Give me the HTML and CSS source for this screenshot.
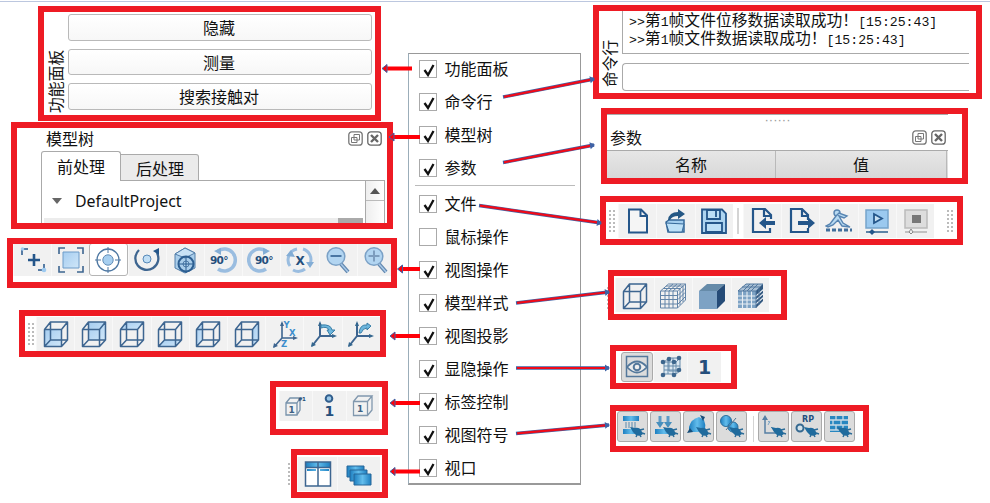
FILE: index.html
```
<!DOCTYPE html>
<html lang="zh-CN">
<head>
<meta charset="utf-8">
<title>功能面板</title>
<link rel="stylesheet" href="styles.css">
</head>
<body>
<svg class="defs" width="0" height="0">
  <defs>
    <linearGradient id="sky" x1="0" y1="0" x2="1" y2="1"><stop offset="0" stop-color="#a6cdf0"/><stop offset="1" stop-color="#cfe6f8"/></linearGradient>
    <linearGradient id="deep" x1="0" y1="0" x2="1" y2="0"><stop offset="0" stop-color="#1e7fc0"/><stop offset=".5" stop-color="#63bdec"/><stop offset="1" stop-color="#1e7fc0"/></linearGradient>
    <g id="edges" fill="none" stroke="#3d6590" stroke-width="1.5" stroke-linejoin="round"><path d="M2.5 26.500V9.500H19.500V26.500ZM8.500 2H25.500V20H8.500ZM2.500 9.500 8.500 2M19.500 9.500 25.500 2M19.500 26.500 25.500 20M2.500 26.500 8.500 20"/></g>
    <g id="hand"><path d="m11 14 5 1q4-1 6 2l2 4q-3 3-7 1l-3-3z" fill="#206b9d"/><path d="m21 17 4-1m-2 4 3 1m-5 1 1 2m-4-2-1 2" stroke="#2b6c98" stroke-width="1.500"/></g>
    <g id="float" fill="none" stroke="#777"><rect x=".8" y=".8" width="13.400" height="13.400" rx="3" stroke-width="1.300"/><path d="M6 3.500h5.500V9H6zM3.500 6.500H9v5H3.500z"/></g>
    <g id="close" fill="none" stroke="#666"><rect x=".8" y=".8" width="13.400" height="13.400" rx="3" stroke-width="1.300"/><path d="m4 4 7 7m0-7-7 7" stroke-width="2.400"/></g>
    <g id="tick"><path d="M4.500 9 8 14 13.500 4" fill="none" stroke="#111" stroke-width="2.300"/></g>
    <marker id="head" viewBox="0 0 6 8" refX="5" refY="4" markerWidth="6" markerHeight="8" markerUnits="userSpaceOnUse" orient="auto"><path d="M1 .5 6 4 1 7.500Z" fill="#3f62a5"/></marker>
  </defs>
</svg>

<main class="canvas">
  <section class="callout functions">
    <div class="vertical">功能面板</div>
    <div class="buttons"><div class="push">隐藏</div><div class="push">测量</div><div class="push">搜索接触对</div></div>
  </section>

  <section class="callout model">
    <div class="dock-title"><span>模型树</span><svg width="15" height="15"><use href="#float"/></svg><svg width="15" height="15"><use href="#close"/></svg></div>
    <div class="tabs"><div class="tab active">前处理</div><div class="tab">后处理</div></div>
    <div class="tree">
      <div class="tree-body"><div class="tree-row"><svg width="10" height="6"><path d="M0 0H10L5 6Z" fill="#666"/></svg><span>DefaultProject</span></div><div class="tree-header"></div></div>
      <div class="scroll"><svg width="10" height="6"><path d="M0 6H10L5 0Z" fill="#555"/></svg></div>
    </div>
  </section>

  <section class="callout bar viewops">
    <div class="slot"><svg width="28" height="28" fill="none" stroke="#24568a"><path d="M3 9V3h6M19 24h6v-6" stroke-width="1.500"/><path d="M9 14h12M15 8v12" stroke-width="2.600"/><circle cx="3.500" cy="3" r="1.800" fill="#9dcaf0" stroke="none"/><circle cx="25" cy="24" r="2.300" fill="#9dcaf0" stroke="none"/></svg></div>
    <div class="slot"><svg width="28" height="28"><path d="M6 6h16v16H6z" fill="url(#sky)" stroke="#6c9bc8"/><path d="M2 8V2h6M20 2h6v6M26 20v6h-6M8 26H2v-6" fill="none" stroke="#3d6590" stroke-width="1.600"/></svg></div>
    <div class="slot pressed-light"><svg width="28" height="28"><circle cx="14" cy="14" r="5.200" fill="#a7cff0" stroke="#648eb7"/><circle cx="14" cy="14" r="11" fill="none" stroke="#4d77a2" stroke-width="1.300"/><path d="M14 1v6m0 14v6M1 14h6m14 0h6" stroke="#4d77a2"/></svg></div>
    <div class="slot"><svg width="28" height="28"><circle cx="14" cy="13" r="4" fill="#c0def5" stroke="#5789b8"/><path d="M6 4A11.500 11.500 0 1 0 24 7" fill="none" stroke="#3d6590" stroke-width="2.300"/><path d="m20 5 6-3v7z" fill="#24568a"/></svg></div>
    <div class="slot"><svg width="28" height="28" stroke="#537ea9"><path d="m4 8 10-6 10 5v15l-10 5-10-5z" fill="#a9cdea"/><path d="m4 8 10 4 10-5-10-5z" fill="#c8e2f5"/><circle cx="15" cy="18" r="7.500" fill="none" stroke="#2c5e91" stroke-width="2"/><circle cx="15" cy="18" r="3" fill="none"/><path d="M15 10v17M7 18h16" stroke="#2c5e91"/></svg></div>
    <div class="slot"><svg width="30" height="28"><path d="M9 5A11 11 0 1 1 9 23" fill="none" stroke="#9abde0" stroke-width="3.500"/><path d="m5 5 7-3v7z" fill="#83add5"/><text x="1" y="18" class="degree">90°</text></svg></div>
    <div class="slot"><svg width="30" height="28"><path d="M19 5A11 11 0 1 0 19 23" fill="none" stroke="#9abde0" stroke-width="3.500"/><path d="m23 5-7-3v7z" fill="#83add5"/><text x="8" y="18" class="degree">90°</text></svg></div>
    <div class="slot"><svg width="28" height="28"><path d="M11 3A11 11 0 0 0 4 20M7 24A11 11 0 0 0 19 23M24 18A11 11 0 0 0 17 3" fill="none" stroke="#9abde0" stroke-width="3"/><path d="m0 10 5-6 4 7zM20 16h8l-4 6z" fill="#83add5"/><text x="9.500" y="19" class="letter">X</text></svg></div>
    <div class="slot"><svg width="28" height="28"><path d="m17 18 7 8" stroke="#6288af" stroke-width="4"/><path d="m17 18 7 8" stroke="#a9c9e8" stroke-width="1.500"/><circle cx="12" cy="10.500" r="8.800" fill="#b2d5f1" stroke="#7ba1c6" stroke-width="1.500"/><path d="M6.500 10h11" stroke="#4a76a3" stroke-width="2"/></svg></div>
    <div class="slot"><svg width="28" height="28"><path d="m17 18 7 8" stroke="#6288af" stroke-width="4"/><path d="m17 18 7 8" stroke="#a9c9e8" stroke-width="1.500"/><circle cx="12" cy="10.500" r="8.800" fill="#b2d5f1" stroke="#7ba1c6" stroke-width="1.500"/><path d="M6.500 10h11M12 4.500v11" stroke="#7d9dbe" stroke-width="2"/></svg></div>
  </section>

  <section class="callout bar projection">
    <div class="grip"></div>
    <div class="slot"><svg width="28" height="28"><path d="M2.500 9.500h17v17h-17z" fill="url(#sky)"/><use href="#edges"/></svg></div>
    <div class="slot"><svg width="28" height="28"><path d="M8.500 2h17v18h-17z" fill="url(#sky)"/><use href="#edges"/></svg></div>
    <div class="slot"><svg width="28" height="28"><path d="m2.500 9.500 6-7.500h17l-6 7.500z" fill="url(#sky)"/><use href="#edges"/></svg></div>
    <div class="slot"><svg width="28" height="28"><path d="m2.500 26.500 6-6.500h17l-6 6.500z" fill="url(#sky)"/><use href="#edges"/></svg></div>
    <div class="slot"><svg width="28" height="28"><path d="m2.500 9.500 6-7.500v18l-6 6.500z" fill="url(#sky)"/><use href="#edges"/></svg></div>
    <div class="slot"><svg width="28" height="28"><path d="m19.500 9.500 6-7.500v18l-6 6.500z" fill="url(#sky)"/><use href="#edges"/></svg></div>
    <div class="slot"><svg width="28" height="28"><path d="M11 3v15h13M11 18l-8 9" fill="none" stroke="#3d6590" stroke-width="1.600"/><path d="m9 6 2-5 2 5zM22 16l5 2-5 2zM2 28l1-5 4 3z" fill="#3d6590"/><text x="12.500" y="8" class="axis">Y</text><text x="18" y="16" class="axis">X</text><text x="10" y="26.500" class="axis">Z</text></svg></div>
    <div class="slot"><svg width="28" height="28"><path d="M11 3v13h14M11 16 3 26" fill="none" stroke="#3d6590" stroke-width="2"/><path d="m9 6 2-5 2 5zM23 14l5 2-5 2zM2 27l1-5 4 3z" fill="#34678f"/><path d="M12 5Q22 4 23 10h3l-5 5-3-5h2Q18 6 12 8Z" fill="#6cb5dc" stroke="#397fa8"/></svg></div>
    <div class="slot"><svg width="28" height="28"><path d="M10 3v13h14M10 16 2 26" fill="none" stroke="#3d6590" stroke-width="2"/><path d="m8 6 2-5 2 5zM22 14l5 2-5 2zM1 27l1-5 4 3z" fill="#34678f"/><path d="M12 13Q13 4 20 5V3l4 3-4 4V8Q16 8 14 13Z" fill="#6cb5dc" stroke="#397fa8"/></svg></div>
  </section>

  <section class="callout bar labels">
    <div class="slot"><svg width="24" height="24" fill="none" stroke="#7792ab"><path d="M2 9h11v12H2zM2 9l4-5h10l-3 5M16 4v12l-3 5" stroke-width="1.300"/><text x="4.500" y="19" class="small-num">1</text><text x="14" y="7" class="tiny-num">#1</text></svg></div>
    <div class="slot"><svg width="22" height="24"><circle cx="11" cy="4.500" r="3.300" fill="#9bc8e8" stroke="#315e8d" stroke-width="2"/><text x="6.500" y="22" class="label-num">1</text></svg></div>
    <div class="slot"><svg width="22" height="24" fill="none" stroke="#8198ae"><path d="M1.500 7.500h14v14h-14zM1.500 7.500 6 2h14l-4.500 5.500M20 2v14l-4.500 5.500" stroke-width="1.300"/><text x="5" y="18" class="small-num">1</text></svg></div>
  </section>

  <div class="outside-grip view-grip"></div>
  <section class="callout bar viewport">
    <div class="slot"><svg width="28" height="28"><path d="M1.500 2h25v24h-25z" fill="#fff"/><path d="M2 2h12v6H2zM14 2h12v6H14zM3 9h9v2H3zM16 9h9v2h-9z" fill="url(#deep)"/><path d="M1.500 2h25v24h-25zM14 2v24M2 7.500h24" fill="none" stroke="#3d6590" stroke-width="1.500"/></svg></div>
    <div class="slot"><svg width="28" height="28" fill="url(#deep)" stroke="#266799"><path d="M2 6h17v11H2z"/><path d="M5 10h17v11H5z"/><path d="M9 14h17v11H9z"/></svg></div>
  </section>

  <section class="callout command">
    <div class="vertical">命令行</div>
    <div class="terminal">
      <div class="log"><p><span class="mono">&gt;&gt;</span>第<span class="mono">1</span>帧文件位移数据读取成功！<span class="mono">[15:25:43]</span></p><p><span class="mono">&gt;&gt;</span>第<span class="mono">1</span>帧文件数据读取成功！<span class="mono">[15:25:43]</span></p></div>
      <div class="prompt"></div>
    </div>
  </section>

  <section class="callout parameters">
    <div class="dots">······</div>
    <div class="dock-title"><span>参数</span><svg width="15" height="15"><use href="#float"/></svg><svg width="15" height="15"><use href="#close"/></svg></div>
    <div class="table-head"><div>名称</div><div>值</div></div>
  </section>

  <section class="callout bar files">
    <div class="grip"></div>
    <div class="slot"><svg width="28" height="28"><path d="M5 2.500h12l6 6v17H5zM16.500 3v6H23" fill="#f5f5f5" stroke="#24568a" stroke-width="2"/></svg></div>
    <div class="slot"><svg width="28" height="28"><path d="m4 15 3-2h15v12H6z" fill="#a4cff0" stroke="#356899" stroke-width="1.500"/><path d="m4 16 18 1-2 8H7z" fill="#bde0f7" stroke="#356899"/><path d="M6 13Q7 5 16 5V2l7 5-7 5V9q-6 0-8 4z" fill="#245784"/></svg></div>
    <div class="slot"><svg width="28" height="28" fill="#add4f0" stroke="#24568a" stroke-width="1.800"><path d="M2 2.500h20l4 4V26H2z"/><path d="M7 3h13v9H7zM6 16h16v9H6z" fill="#bddff6"/><path d="M16 4v6"/></svg></div>
    <div class="divider"></div>
    <div class="slot"><svg width="28" height="28"><path d="M22 12V8l-6-6H4v23h17v-4M15 2v7h6" fill="none" stroke="#24568a" stroke-width="2.200"/><path d="m10 16 7-6v4h9v4h-9v4z" fill="#24568a"/></svg></div>
    <div class="slot"><svg width="28" height="28"><path d="M21 13V8l-6-6H4v23h17v-4M15 2v7h6" fill="none" stroke="#24568a" stroke-width="2.200"/><path d="M11 14h10v-4l7 6-7 6v-4H11z" fill="#24568a"/></svg></div>
    <div class="slot"><svg width="28" height="28"><g fill="#b8daf2" stroke="#5784b1" stroke-width="1.400"><circle cx="12" cy="6" r="3"/><path d="m11 9-6 8-4 2 2 1 5-2 5-5 4 6 8 1-7-4-4-7 5 2 3-2-8-3z"/></g><path d="M1 23h26" stroke="#416f9c" stroke-width="3" stroke-dasharray="4 2"/></svg></div>
    <div class="slot"><svg width="28" height="28"><path d="M3 3h22v18H3z" fill="#9bc9ef" stroke="#75a4cc" stroke-width="1.500"/><path d="m11 7 8 4.500-8 4.500z" fill="#c7e0f2" stroke="#24568a" stroke-width="1.800"/><path d="M3 25h22" stroke="#5c83a6" stroke-width="2"/><path d="m9 22 3 3-3 3-3-3z" fill="#24568a"/></svg></div>
    <div class="slot"><svg width="28" height="28"><path d="M3 3h22v18H3z" fill="#ddd" stroke="#bbb" stroke-width="1.500"/><path d="M10 8h9v8h-9z" fill="#777"/><path d="M3 25h22" stroke="#b0b0b0" stroke-width="1.500"/><path d="m9 22 2 3-2 2-2-2z" fill="#eee" stroke="#888"/></svg></div>
    <div class="grip"></div>
  </section>

  <div class="outside-grip style-grip"></div>
  <section class="callout bar styles">
    <div class="slot"><svg width="28" height="28"><use href="#edges"/></svg></div>
    <div class="slot"><svg width="28" height="28" fill="none" stroke="#6284a8" stroke-width="1"><path d="M1.500 9h17v17h-17zM1.500 9l8-7h17l-8 7M26.500 2v16l-8 8M6 9v17M10 9v17M14 9v17M2 13.500h17l7-7M2 17.500h17l7-7M2 22h17l7-7M6 9l8-7M10 9l8-7M14 9l8-7M21 7v16M24 4v16M7 4h17M4 6.500h17"/></svg></div>
    <div class="slot"><svg width="28" height="28"><path d="M1 9h18v18H1z" fill="#7da2c4"/><path d="m1 9 8-7h18l-8 7z" fill="#668ba9"/><path d="m19 9 8-7v17l-8 8z" fill="#254b77"/></svg></div>
    <div class="slot"><svg width="28" height="28"><path d="M1 9h18v17H1z" fill="#7da2c4"/><path d="m19 9 7-7v17l-7 7z" fill="#31577f"/><path d="m1 9 8-7h17l-7 7z" fill="#a9c0d5"/><g fill="none" stroke="#e8eef4" stroke-width="1.100"><path d="M5.500 9v18M10 9v18M14.500 9v18M1 14h18l8-7M1 18h18l8-7M1 22h18l8-7"/></g><path d="m1 9 8-7h17l-7 7zM6 9l7-7M10 9l7-7M14 9l7-7M5 5h18M19 9v17M22 6v17" fill="none" stroke="#52789f"/></svg></div>
  </section>

  <section class="callout bar visibility">
    <div class="slot pressed"><svg width="24" height="24" fill="none" stroke="#54789b"><path d="M1.500 1.500h21v20h-21z" stroke-width="1.500"/><path d="M2 12Q12 1 22 12 12 23 2 12Z" fill="#eee" stroke-width="1.800"/><circle cx="12" cy="12" r="3.300" stroke-width="2"/></svg></div>
    <div class="slot"><svg width="24" height="24"><path d="M5 7h12v12H5zM10 3h11v13H10zM5 7l5-4M17 7l4-4M17 19l4-3M9 3v16M14 3v16M5 11h16M5 15h16" stroke="#668bab" fill="#dce8f1"/><g fill="#3d668d"><circle cx="10" cy="4" r="2.300"/><circle cx="20" cy="3" r="2.300"/><circle cx="4" cy="7" r="2.300"/><circle cx="15" cy="7" r="2.300"/><circle cx="4" cy="20" r="2.300"/><circle cx="15" cy="20" r="2.300"/><circle cx="20" cy="15" r="2.300"/></g></svg></div>
    <div class="slot"><svg width="24" height="24"><text x="5" y="18.500" class="big-num">1</text></svg></div>
  </section>

  <section class="callout bar symbols">
    <div class="slot pressed"><svg width="28" height="28"><path d="M4 3h16v5H4zM4 16h16v5H4z" fill="url(#deep)"/><path d="M7 9v6m3-6v6m3-6v6m3-6v6" stroke="#588aae"/><use href="#hand"/></svg></div>
    <div class="slot pressed"><svg width="28" height="28"><path d="M3 16h18v5H3z" fill="url(#deep)"/><path d="M8 3v8m8-8v8" stroke="#5c9bc7" stroke-width="3"/><path d="m4 9 4 6 4-6zm8 0 4 6 4-6z" fill="#478fbd"/><use href="#hand"/></svg></div>
    <div class="slot pressed"><svg width="28" height="28"><path d="M4 19V14Q6 6 14 4l5 3q2 5 1 9l-7 3z" fill="url(#deep)"/><path d="m15 2 5 2-2 4zM2 20l3-5 3 4z" fill="#174e79"/><use href="#hand"/></svg></div>
    <div class="slot pressed"><svg width="28" height="28"><circle cx="8" cy="8" r="5.500" fill="url(#deep)" stroke="#2d719e"/><circle cx="15" cy="14" r="5" fill="url(#deep)" stroke="#2d719e"/><path d="m8 17 10-12" stroke="#507391"/><use href="#hand"/></svg></div>
    <div class="divider"></div>
    <div class="slot pressed"><svg width="28" height="28"><path d="M5 5v15h13" fill="none" stroke="#557fa4" stroke-width="1.500"/><path d="m2 7 3-5 3 5zM17 17l5 3-5 3z" fill="#557fa4"/><path d="m8 8 2 2m0-2-2 4m3 2 3 3" stroke="#7ca5c5"/><use href="#hand"/></svg></div>
    <div class="slot pressed"><svg width="28" height="28"><text x="9" y="8.500" class="rp">RP</text><circle cx="7" cy="15" r="3.500" fill="#d4e2ea" stroke="#366990" stroke-width="2"/><use href="#hand"/></svg></div>
    <div class="slot pressed"><svg width="28" height="28"><path d="M4 3h18v16H4z" fill="#2887c0"/><path d="M4 7h18M4 12h18M4 17h18M10 3v4m7-4v4M7 7v5m8-5v5M10 12v5m7-5v5" stroke="#c9dae5" stroke-width="1.300"/><use href="#hand"/></svg></div>
  </section>

  <section class="menu">
    <div class="item"><svg class="check" width="18" height="18"><use href="#tick"/></svg><span>功能面板</span></div>
    <div class="item"><svg class="check" width="18" height="18"><use href="#tick"/></svg><span>命令行</span></div>
    <div class="item"><svg class="check" width="18" height="18"><use href="#tick"/></svg><span>模型树</span></div>
    <div class="item"><svg class="check" width="18" height="18"><use href="#tick"/></svg><span>参数</span></div>
    <div class="separator"></div>
    <div class="item"><svg class="check" width="18" height="18"><use href="#tick"/></svg><span>文件</span></div>
    <div class="item"><svg class="check" width="18" height="18"></svg><span>鼠标操作</span></div>
    <div class="item"><svg class="check" width="18" height="18"><use href="#tick"/></svg><span>视图操作</span></div>
    <div class="item"><svg class="check" width="18" height="18"><use href="#tick"/></svg><span>模型样式</span></div>
    <div class="item"><svg class="check" width="18" height="18"><use href="#tick"/></svg><span>视图投影</span></div>
    <div class="item"><svg class="check" width="18" height="18"><use href="#tick"/></svg><span>显隐操作</span></div>
    <div class="item"><svg class="check" width="18" height="18"><use href="#tick"/></svg><span>标签控制</span></div>
    <div class="item"><svg class="check" width="18" height="18"><use href="#tick"/></svg><span>视图符号</span></div>
    <div class="item"><svg class="check" width="18" height="18"><use href="#tick"/></svg><span>视口</span></div>
  </section>

  <svg class="arrows" width="990" height="503">
    <g stroke="#ff0008" stroke-width="4"><path d="M412 68.500H385M420 137H393M420 269H401M420 336H393M420 403H393M420 471.500H393"/></g>
    <g fill="#ff0008" stroke="#3f62a5" stroke-width="1"><path d="m382 68.500 5-4v8zM389 137l5-4v8zM397.500 269l5-4v8zM390 336l5-4v8zM390 403l5-4v8zM390 471.500l5-4v8z"/></g>
    <g stroke="#3f62a5" stroke-width="3.400"><path d="M503 97 594 79" marker-end="url(#head)"/><path d="M503 162.500 594 145" marker-end="url(#head)"/><path d="M479 205.500 601 223" marker-end="url(#head)"/><path d="M516 303 609 292" marker-end="url(#head)"/><path d="M516 368 609 368" marker-end="url(#head)"/><path d="M516 433.500 609 425" marker-end="url(#head)"/></g>
    <path d="M504 96.800 590 79.800M504 162.300 590 145.800M480 205.600 597 222.400M517 302.900 605 292.500M517 368H605M517 433.400 605 425.400" stroke="#f00a18" stroke-width="2.200"/>
  </svg>
</main>
</body>
</html>
```
FILE: styles.css
```
* { box-sizing: border-box; }
body { margin: 0; background: #fff; color: #111; font: 16px/20px "Noto Sans CJK SC", sans-serif; }
.defs { position: absolute; }
.canvas { position: relative; width: 990px; height: 503px; overflow: hidden; border-top: 1px solid #fff; }
.canvas::before { content: ""; display: block; height: 1px; background: #bcc7df; }
svg { display: block; flex: none; }
svg text { stroke: none; fill: #254f7c; font-family: "DejaVu Sans", sans-serif; font-weight: bold; }

/* Annotated fragments pinned on the diagram */
.callout { position: absolute; border: 6.500px solid #ee1b24; background: #fff; overflow: hidden; margin-top: -1px; }
.functions { left: 38px; top: 6px; width: 343px; height: 115px; display: flex; padding: 0 3px 0 3px; }
.model { left: 11px; top: 122px; width: 382px; height: 107px; }
.viewops { left: 7px; top: 238px; width: 390px; height: 50px; }
.projection { left: 19px; top: 310px; width: 367px; height: 47px; }
.labels { left: 270px; top: 381px; width: 118px; height: 54px; }
.viewport { left: 291px; top: 449px; width: 97px; height: 49px; }
.command { left: 593px; top: 5px; width: 389px; height: 94px; display: flex; }
.parameters { left: 601px; top: 108px; width: 367px; height: 76px; }
.files { left: 600px; top: 196px; width: 363px; height: 49px; }
.styles { left: 608px; top: 270px; width: 179px; height: 50px; }
.visibility { left: 610px; top: 345px; width: 127px; height: 44px; }
.symbols { left: 610px; top: 405px; width: 259px; height: 47px; }

.vertical { writing-mode: vertical-rl; text-orientation: sideways; transform: rotate(180deg); width: 18px; line-height: 18px; font-size: 15.800px; white-space: nowrap; }
.functions .vertical { padding-bottom: 37px; margin-right: 3px; height: 101px; }
.buttons { flex: 1; padding-top: 2px; display: flex; flex-direction: column; gap: 8px; }
.push { height: 26.500px; flex: none; border: 1px solid #b9b9b9; border-radius: 3px; background: linear-gradient(#fff, #f7f7f7); text-align: center; line-height: 24px; padding-right: 2px; }

.dock-title { display: flex; align-items: center; gap: 4px; height: 22px; }
.dock-title span { flex: 1; }
.model .dock-title { padding: 0 5px 2px 29px; }
.tabs { display: flex; align-items: flex-end; height: 31px; padding-left: 24px; position: relative; z-index: 1; }
.tab { width: 78px; height: 27px; border: 1px solid #aaa; border-left: 0; background: #ebebeb; border-radius: 0 3px 0 0; padding-left: 15px; line-height: 26px; }
.tab.active { width: 80px; height: 30px; border: 1px solid #aaa; border-bottom: 0; background: #fff; border-radius: 3px 3px 0 0; line-height: 29px; }
.tree { margin: -1px 2px 0 24px; border: 1px solid #aaa; display: flex; height: 50px; }
.tree-body { flex: 1; }
.tree-row { height: 37px; display: flex; align-items: center; gap: 13px; padding: 3px 0 0 10px; font: 15.900px/20px "Noto Sans", sans-serif; }
.tree-header { margin-left: 2px; height: 8px; background: linear-gradient(to right, #ececec calc(100% - 27px), #aaa calc(100% - 27px), #aaa calc(100% - 2px), #fff calc(100% - 2px)); }
.scroll { width: 19px; border-left: 1px solid #aaa; padding: 7px 0 0 4px; background: linear-gradient(transparent 19px, #bbb 19px, #bbb 20px, transparent 20px), linear-gradient(to right, #eee, #fff); }

.bar { display: flex; align-items: center; }
.slot { flex: none; display: flex; justify-content: center; align-items: center; height: 34px; background: #f1f1f1; border-left: 1px solid #f8f8f8; }
.grip, .outside-grip { background: radial-gradient(circle, #bbb 0 1px, transparent 1.300px) 0 0 / 4px 4px; }
.grip { width: 8px; height: 24px; flex: none; }
.outside-grip { position: absolute; width: 4px; height: 24px; }
.view-grip { left: 287px; top: 461px; }
.style-grip { left: 606px; top: 285px; }
.divider { width: 2px; height: 26px; background: #d4d4d4; flex: none; }
.pressed { background: #dcdcdc; border: 1.500px solid #aaa; border-radius: 3px; }
.slot.pressed-light { background: #fff; border: 1px solid #b5b5b5; border-radius: 3px; }
.viewops { align-items: flex-start; }
.viewops .slot { width: 38.200px; height: 33px; margin-top: -1px; }
.projection { padding-left: 1px; }
.projection .grip { margin: 0 1px 0 1px; }
.projection .slot { width: 38.200px; }
.labels { padding-left: 3px; align-items: flex-start; }
.labels .slot { width: 33.300px; height: 30px; margin-top: 4px; }
.viewport .slot { width: 43px; }
.viewport .slot:first-child { width: 40px; }
.files { padding-left: 2px; }
.files .grip { margin-right: 2px; }
.files .grip:last-child { margin: 0 0 0 12px; }
.files .slot { width: 38.300px; }
.files .divider { margin: 0 4px; }
.styles { padding-left: 1px; }
.styles .slot { width: 38.600px; padding-top: 1px; }
.visibility { padding-left: 5px; }
.visibility .slot { width: 34px; height: 30px; }
.visibility .slot.pressed { width: 32px; }
.symbols { gap: 2px; padding-left: 1px; }
.symbols .slot { width: 31px; height: 31px; margin-top: -4px; }
.symbols .divider { margin: 0 2px 0 4px; width: 1px; }
svg .degree { font-size: 10.500px; letter-spacing: -.7px; }
svg .letter { font-size: 12px; }
svg .axis { font-size: 8.500px; fill: #3d8dcc; }
svg .small-num { font-size: 9px; fill: #3d6184; }
svg .tiny-num { font-size: 5.500px; letter-spacing: -.6px; }
svg .label-num { font-size: 14px; }
svg .big-num { font-size: 19px; }
svg .rp { font-size: 8px; }

.command .vertical { padding-bottom: 28px; margin: -5px 3px 0 2px; height: 81px; }
.command { padding-right: 7px; }
.terminal { flex: 1; }
.log { height: 43px; border-left: 1px solid #aaa; border-bottom: 1px solid #aaa; padding-left: 6px; white-space: nowrap; font-size: 15.800px; }
.log p { margin: 0; height: 18px; line-height: 17px; }
.mono { font-family: "Liberation Mono", monospace; font-size: 13.200px; line-height: 1; }
.prompt { margin-top: 9px; height: 28px; border: 1px solid #aaa; border-right: 0; border-radius: 4px 0 0 4px; }

.dots { height: 10px; margin-right: 14px; border-top: 1px solid #aaa; text-align: center; color: #999; line-height: 9px; font-family: "Liberation Sans", sans-serif; font-size: 13px; }
.parameters .dock-title { height: 26px; padding: 0 16px 0 3px; }
.table-head { display: flex; margin-right: 14px; height: 28px; border-top: 1px solid #aaa; background: linear-gradient(#e6e6e6, #d8d8d8); text-align: center; line-height: 26px; }
.table-head div { width: 169px; border-right: 1px solid #b9b9b9; }
.table-head div:last-child { width: 171px; }

.menu { position: absolute; left: 408px; top: 52px; width: 173px; height: 432px; border: 1.500px solid #999; border-left-color: #9badb9; border-bottom-width: 2px; background: #fff; }
.item { height: 33px; display: flex; align-items: center; gap: 8px; padding-left: 9.500px; position: relative; top: -2px; }
.item span { margin-top: -1px; }
.check { border: 1px solid #aaa; overflow: hidden; }
.separator { height: 1px; margin: -1px 5px 3px 6px; background: #bbb; }
.arrows { position: absolute; left: 0; top: -1px; fill: none; }
```
